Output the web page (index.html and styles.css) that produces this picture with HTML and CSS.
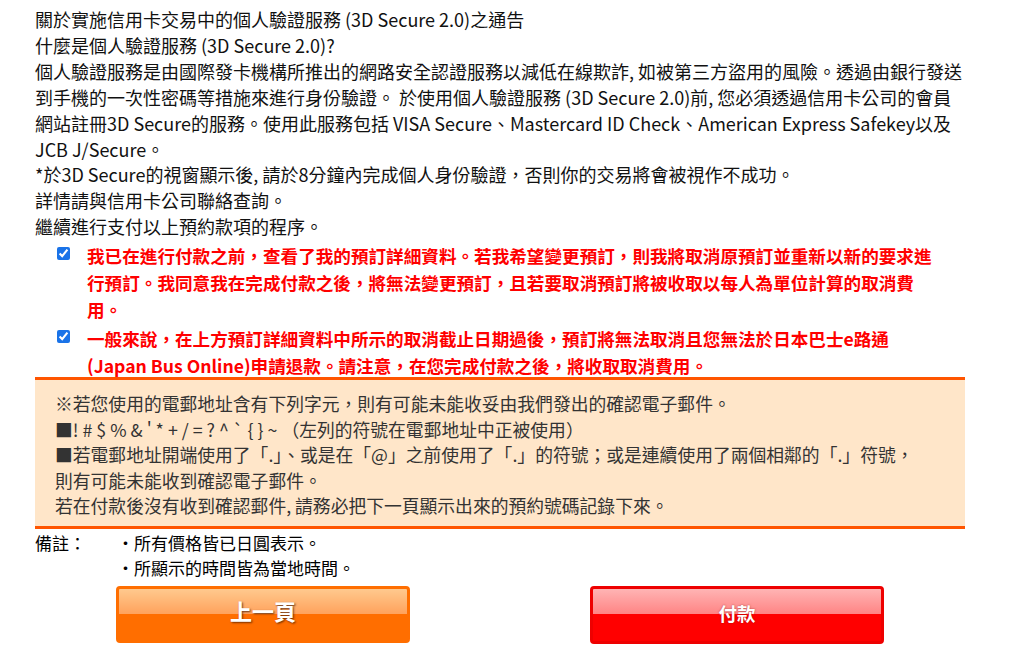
FILE: index.html
```html
<!DOCTYPE html>
<html lang="zh-Hant">
<head>
<meta charset="utf-8">
<title>3D Secure 2.0</title>
<link rel="stylesheet" href="styles.css">
</head>
<body>
<div class="page">
  <div class="notice">
    <div>關於實施信用卡交易中的個人驗證服務 (3D Secure 2.0)之通告</div>
    <div>什麼是個人驗證服務 (3D Secure 2.0)?</div>
    <div>個人驗證服務是由國際發卡機構所推出的網路安全認證服務以減低在線欺詐, 如被第三方盜用的風險。透過由銀行發送到手機的一次性密碼等措施來進行身份驗證。 於使用個人驗證服務 (3D Secure 2.0)前, 您必須透過信用卡公司的會員網站註冊3D Secure的服務。使用此服務包括 VISA Secure、Mastercard ID Check、American Express Safekey以及JCB J/Secure。</div>
    <div>*於3D Secure的視窗顯示後, 請於8分鐘內完成個人身份驗證，否則你的交易將會被視作不成功。</div>
    <div>詳情請與信用卡公司聯絡查詢。</div>
    <div>繼續進行支付以上預約款項的程序。</div>
  </div>
  <ul class="agree">
    <li class="agree-item">
      <input type="checkbox" class="check" checked>
      <span class="agree-text">我已在進行付款之前，查看了我的預訂詳細資料。若我希望變更預訂，則我將取消原預訂並重新以新的要求進行預訂。我同意我在完成付款之後，將無法變更預訂，且若要取消預訂將被收取以每人為單位計算的取消費用。</span>
    </li>
    <li class="agree-item">
      <input type="checkbox" class="check" checked>
      <span class="agree-text">一般來說，在上方預訂詳細資料中所示的取消截止日期過後，預訂將無法取消且您無法於日本巴士e路通 (Japan Bus Online)申請退款。請注意，在您完成付款之後，將收取取消費用。</span>
    </li>
  </ul>
  <div class="mailbox">
    <div>※若您使用的電郵地址含有下列字元，則有可能未能收妥由我們發出的確認電子郵件。</div>
    <div>■! # $ % &amp; ' * + / = ? ^ ` { } ~ （左列的符號在電郵地址中正被使用）</div>
    <div>■若電郵地址開端使用了「.」、或是在「@」之前使用了「.」的符號；或是連續使用了兩個相鄰的「.」符號，則有可能未能收到確認電子郵件。</div>
    <div>若在付款後沒有收到確認郵件, 請務必把下一頁顯示出來的預約號碼記錄下來。</div>
  </div>
  <div class="remarks">
    <div class="remarks-label">備註：</div>
    <div class="remarks-list">
      <div>・所有價格皆已日圓表示。</div>
      <div>・所顯示的時間皆為當地時間。</div>
    </div>
  </div>
  <div class="actions">
    <button class="btn btn-back" type="button"><span class="btn-label">上一頁</span></button>
    <button class="btn btn-pay" type="button"><span class="btn-label">付款</span></button>
  </div>
</div>
</body>
</html>
```

FILE: styles.css
```css
html, body {
  margin: 0;
  padding: 0;
  background: #ffffff;
}

body {
  font-family: "Noto Sans CJK TC", "Noto Sans", sans-serif;
  font-size: 18px;
  color: #111111;
}

.page {
  width: 930px;
  margin-left: 35px;
  padding-top: 7px;
}

.notice {
  line-height: 25.9px;
}

.agree {
  list-style: none;
  margin: 2px 0 0 0;
  padding: 0 0 0 22px;
}

.agree-item {
  display: flex;
  align-items: flex-start;
  color: #ff0000;
  font-weight: bold;
  font-size: 17.6px;
  line-height: 27px;
  margin-bottom: 2px;
}

.agree-item:last-child {
  margin-bottom: 0;
}

.agree-text {
  width: 852px;
}

.check {
  flex: none;
  width: 13px;
  height: 13px;
  margin: 5px 17px 0 0;
  accent-color: #1a73e8;
}

.mailbox {
  margin-top: -2px;
  background: #ffe6c9;
  border-top: 3px solid #ff5500;
  border-bottom: 3px solid #ff5500;
  padding: 11px 40px 7px 20px;
  color: #333333;
  font-size: 17.8px;
  line-height: 25.5px;
}

.remarks {
  display: flex;
  line-height: 25px;
  margin-top: 1px;
  color: #000000;
  font-size: 17px;
}

.remarks-label {
  width: 82px;
  flex: none;
}

.actions {
  display: flex;
  justify-content: center;
  gap: 180px;
  margin-top: 6px;
}

.btn {
  position: relative;
  width: 294px;
  height: 57px;
  border-radius: 4px;
  border: 3px solid;
  padding: 0;
  color: #ffffff;
  font-family: "Noto Sans CJK TC", sans-serif;
  font-weight: bold;
  cursor: pointer;
  overflow: hidden;
}

.btn::before {
  content: "";
  position: absolute;
  left: 0;
  right: 0;
  top: 0;
  height: 25px;
}

.btn-label {
  position: relative;
  display: block;
  text-shadow: 1px 1px 2px rgba(60, 20, 0, 0.75);
}

.btn-back {
  background: #ff6e00;
  border-color: #ff6e00;
  font-size: 22px;
}

.btn-back .btn-label {
  margin-top: -8px;
}

.btn-back::before {
  background: linear-gradient(#ffc98e, #ffa25c);
}

.btn-pay {
  background: #ff0000;
  border-color: #ee0000;
  font-size: 18.5px;
  height: 58px;
}

.btn-pay::before {
  background: linear-gradient(#ffb4b4, #ff8484);
}

.btn-pay .btn-label {
  margin-top: -4px;
  text-shadow: 0 0 2px rgba(120, 0, 0, 0.6);
}
```
